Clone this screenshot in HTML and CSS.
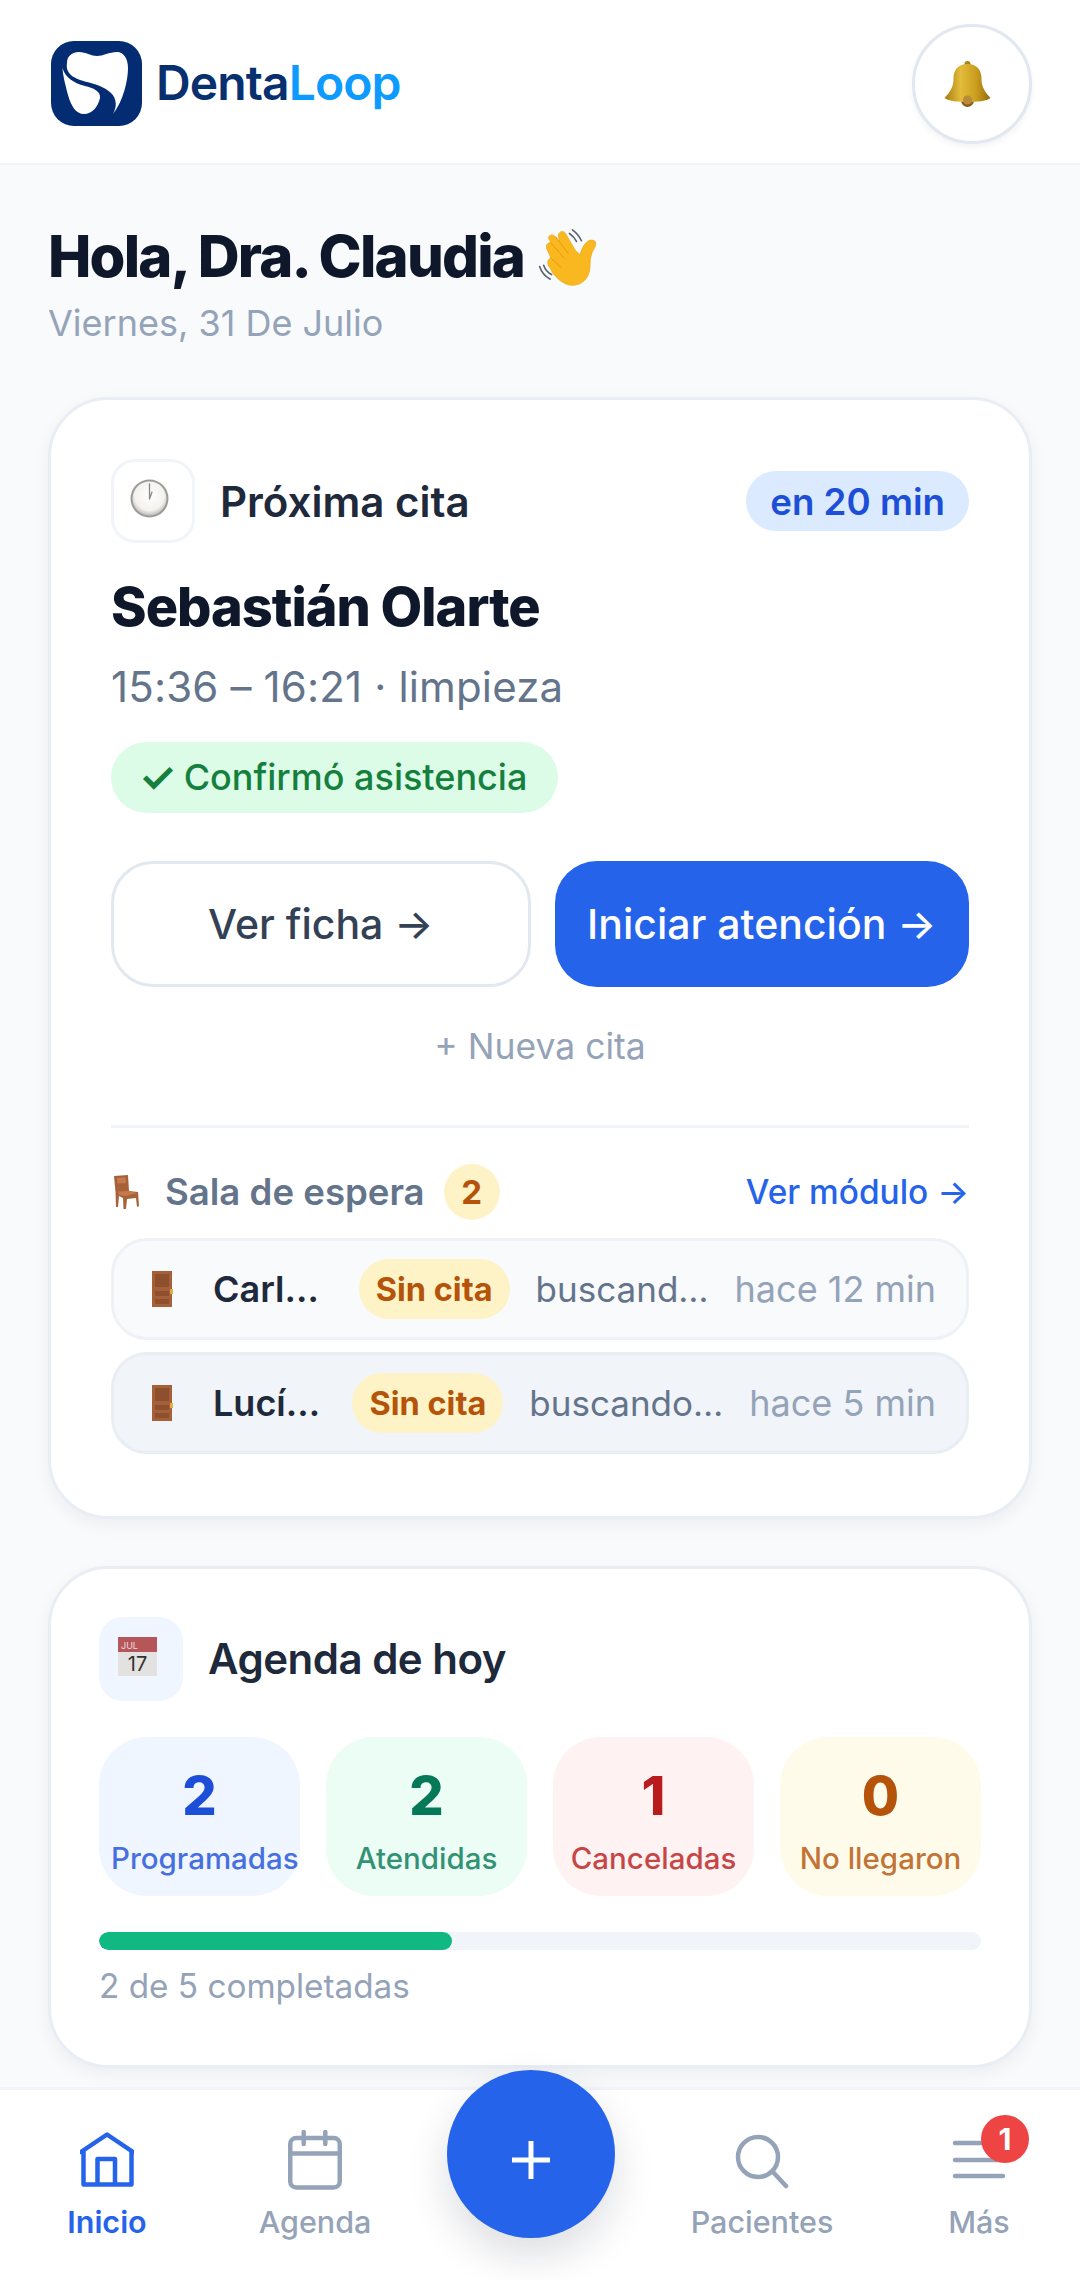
FILE: index.html
```html
<!DOCTYPE html>
<html lang="es">
<head>
    <meta charset="UTF-8">
    <meta name="viewport" content="width=device-width, initial-scale=1.0">
    <title>DentaLoop</title>
    <link rel="stylesheet" href="styles.css">
</head>
<body>
    <header class="topbar">
        <div class="brand">
            <svg class="brand-mark" viewBox="0 0 91 85">
                <rect width="91" height="85" rx="23" fill="#042c72"/>
                <path fill="#fff" d="M16 22C16 15 21 11 28 11C35 11 40 15 46 15C52 15 58 11 66 11C73 11 77 18 77 27C77 40 72 60 62 73C66 66 66 58 60 52C54 46 44 43 36 41C25 38 14 34 16 22Z"/>
                <path fill="#fff" d="M11.5 27C14 36 22 42 34 45C42 47 50 50 49 57C47 66 41 73 33 73C25 73 20 65 17 54C15 46 12 36 11.5 27Z"/>
            </svg>
            <div class="brand-name">Denta<span class="brand-loop">Loop</span></div>
        </div>
        <div class="bell-btn">
            <svg class="bell" viewBox="0 0 47 46">
                <defs>
                    <linearGradient id="bellGold" x1="0" x2="1" y1="0" y2="0">
                        <stop offset="0" stop-color="#a67c10"/>
                        <stop offset=".35" stop-color="#e3bc3c"/>
                        <stop offset=".7" stop-color="#c99c1e"/>
                        <stop offset="1" stop-color="#8f6a0c"/>
                    </linearGradient>
                </defs>
                <circle cx="23.500" cy="3" r="3" fill="#a8841a"/>
                <circle cx="23.500" cy="39.500" r="6.500" fill="#8a5f14"/>
                <path fill="url(#bellGold)" d="M23.500 3C13 3 9.500 10 9.500 18C9.500 26 6 31 .5 37C4 40 14 41 23.500 41C33 41 43 40 46.500 37C41 31 37.500 26 37.500 18C37.500 10 34 3 23.500 3Z"/>
                <circle cx="23.500" cy="39" r="4.500" fill="#b98a3a"/>
            </svg>
        </div>
    </header>

    <main class="content">
        <h1 class="greeting">Hola, Dra. Claudia
            <svg class="wave" viewBox="25 10 190 195">
                <g fill="none" stroke="#5c6470" stroke-width="5" stroke-linecap="round">
                    <path d="M135 27C147 36 156 46 162 60"/>
                    <path d="M126 38C135 44 142 52 147 62"/>
                    <path d="M36 138C41 154 52 168 68 176"/>
                    <path d="M48 134C52 146 60 156 72 162"/>
                </g>
                <path fill="#f9b81f" stroke="#eda211" stroke-width="2" d="M62 50C68 38 80 42 86 50L97 64L92 44C95 30 108 28 114 38L143 88L158 102C164 80 176 58 192 58C208 58 208 72 200 84C190 100 188 118 188 138C188 172 162 198 130 194C110 192 92 178 76 158L66 140C58 130 58 116 70 112L60 90C52 76 58 64 70 66Z"/>
                <g fill="none" stroke="#e8990c" stroke-width="3" stroke-linecap="round">
                    <path d="M86 50L122 98"/>
                    <path d="M70 66L110 112"/>
                    <path d="M70 112L100 140"/>
                </g>
            </svg>
        </h1>
        <p class="date">Viernes, 31 De Julio</p>

        <section class="card card-next">
            <div class="card-head">
                <div class="head-icon head-icon-line">
                    <svg class="emoji-clock" viewBox="0 0 39 39">
                        <defs>
                            <radialGradient id="clockFace" cx=".5" cy=".42" r=".6">
                                <stop offset="0" stop-color="#fff"/>
                                <stop offset=".72" stop-color="#f4f2ee"/>
                                <stop offset="1" stop-color="#b8b6b2"/>
                            </radialGradient>
                        </defs>
                        <circle cx="19.500" cy="19.500" r="19" fill="#9b9b9b"/>
                        <circle cx="19.500" cy="19.500" r="17" fill="url(#clockFace)"/>
                        <path d="M19.500 20V5M19.500 20L22 13" stroke="#888" stroke-width="1.300" stroke-linecap="round"/>
                    </svg>
                </div>
                <h2 class="card-title">Próxima cita</h2>
                <span class="time-pill">en 20 min</span>
            </div>
            <div class="patient">Sebastián Olarte</div>
            <div class="slot">15:36 – 16:21 · limpieza</div>
            <div class="confirm-pill"><span class="confirm-check">✓</span>Confirmó asistencia</div>
            <div class="actions">
                <button class="btn btn-line">Ver ficha →</button>
                <button class="btn btn-main">Iniciar atención →</button>
            </div>
            <div class="new-link">+ Nueva cita</div>
            <div class="divider"></div>
            <div class="wait-head">
                <svg class="emoji-chair" viewBox="0 0 25 34">
                    <path fill="#a8623a" d="M0 1L14 0L15 16L24 17L25 31L23 32L22 23L13 24L12 34L9.500 34L9 23L5 21L4 32L2 32L1.500 17Z"/>
                    <path fill="#c47a4c" d="M3 3L11.500 2.500L12 8L3.500 8.500ZM4 16.500L15 16L23 18L12 21L5 20Z"/>
                </svg>
                <span class="wait-title">Sala de espera</span>
                <span class="wait-count">2</span>
                <span class="wait-link">Ver módulo →</span>
            </div>
            <div class="wait-row">
                <svg class="emoji-door" viewBox="0 0 21 36">
                    <rect width="20" height="36" fill="#a5603a"/>
                    <rect x="3" y="3" width="14" height="13" fill="#8d4f2e"/>
                    <rect x="3" y="20" width="14" height="5" fill="#8d4f2e"/>
                    <rect x="3" y="28" width="14" height="5" fill="#8d4f2e"/>
                    <rect x="18" y="18" width="3" height="5" fill="#e0b040"/>
                </svg>
                <span class="wait-name">Carl…</span>
                <span class="tag">Sin cita</span>
                <span class="wait-reason">buscand…</span>
                <span class="wait-time">hace 12 min</span>
            </div>
            <div class="wait-row wait-row-active">
                <svg class="emoji-door" viewBox="0 0 21 36">
                    <rect width="20" height="36" fill="#a5603a"/>
                    <rect x="3" y="3" width="14" height="13" fill="#8d4f2e"/>
                    <rect x="3" y="20" width="14" height="5" fill="#8d4f2e"/>
                    <rect x="3" y="28" width="14" height="5" fill="#8d4f2e"/>
                    <rect x="18" y="18" width="3" height="5" fill="#e0b040"/>
                </svg>
                <span class="wait-name">Lucí…</span>
                <span class="tag">Sin cita</span>
                <span class="wait-reason">buscando…</span>
                <span class="wait-time">hace 5 min</span>
            </div>
        </section>

        <section class="card card-today">
            <div class="card-head">
                <div class="head-icon head-icon-blue">
                    <svg class="emoji-cal" viewBox="0 0 39 39">
                        <rect width="39" height="39" fill="#e3e2e0"/>
                        <rect width="39" height="15" fill="#b5565a"/>
                        <text class="cal-month" x="3" y="12">JUL</text>
                        <text class="cal-day" x="19.500" y="34">17</text>
                    </svg>
                </div>
                <h2 class="card-title">Agenda de hoy</h2>
            </div>
            <div class="stats">
                <div class="stat stat-blue"><div class="stat-num">2</div><div class="stat-label">Programadas</div></div>
                <div class="stat stat-green"><div class="stat-num">2</div><div class="stat-label">Atendidas</div></div>
                <div class="stat stat-red"><div class="stat-num">1</div><div class="stat-label">Canceladas</div></div>
                <div class="stat stat-amber"><div class="stat-num">0</div><div class="stat-label">No llegaron</div></div>
            </div>
            <div class="progress"><div class="progress-fill" style="width: 40%"></div></div>
            <div class="progress-text">2 de 5 completadas</div>
        </section>
    </main>

    <nav class="tabbar">
        <div class="tab tab-on">
            <svg class="tab-icon" viewBox="0 0 54 60">
                <path d="M1 22L27 4.500L53 22M3.500 21V54.500H51.500V21M17.500 54.500V29H35V54.500"/>
            </svg>
            <span>Inicio</span>
        </div>
        <div class="tab">
            <svg class="tab-icon" viewBox="0 0 54 60">
                <rect x="2.250" y="8" width="49.500" height="49.500" rx="6"/>
                <path d="M2.250 23.500H51.750M15.700 2V14M37.300 2V14"/>
            </svg>
            <span>Agenda</span>
        </div>
        <div class="tab-gap"></div>
        <div class="tab">
            <svg class="tab-icon" viewBox="0 0 54 60">
                <circle cx="23" cy="27" r="20"/>
                <path d="M38 42L51 56"/>
            </svg>
            <span>Pacientes</span>
        </div>
        <div class="tab">
            <div class="menu-wrap">
                <svg class="tab-icon" viewBox="0 0 54 60">
                    <path d="M3 13H51M3 30H51M3 46H51"/>
                </svg>
                <span class="menu-badge">1</span>
            </div>
            <span>Más</span>
        </div>
        <div class="fab">
            <svg class="fab-plus" viewBox="0 0 38 38"><path d="M19 0V38M0 19H38"/></svg>
        </div>
    </nav>
</body>
</html>
```

FILE: styles.css
```css
* {
    box-sizing: border-box;
}
body {
    margin: 0;
    width: 1080px;
    height: 2280px;
    overflow: hidden;
    display: flex;
    flex-direction: column;
    background-color: #f8fafc;
    font-family: Inter, "Noto Sans", sans-serif;
    color: #0f172a;
}

/* top bar */
.topbar {
    height: 165px;
    flex: none;
    display: flex;
    align-items: center;
    justify-content: space-between;
    padding: 4px 48px 0 51px;
    background-color: #fff;
    border-bottom: 2px solid #f1f5f9;
}
.brand {
    display: flex;
    align-items: center;
    gap: 14px;
}
.brand-mark {
    width: 91px;
    height: 85px;
    display: block;
}
.brand-name {
    font-size: 48px;
    font-weight: 600;
    letter-spacing: -0.9px;
    color: #08306f;
    margin-top: -3px;
}
.brand-loop {
    color: #0d9bff;
}
.bell-btn {
    width: 120px;
    height: 120px;
    border-radius: 50%;
    border: 3px solid #e2e8f0;
    background-color: #fff;
    box-shadow: 0 3px 6px rgba(15, 23, 42, 0.05);
    display: flex;
    align-items: center;
    justify-content: center;
}
.bell {
    width: 47px;
    height: 46px;
    margin-right: 10px;
}

/* greeting */
.content {
    flex: 1;
    min-height: 0;
    overflow: hidden;
    padding: 60px 48px 0;
}
.greeting {
    margin: 0;
    height: 63px;
    display: flex;
    align-items: center;
    gap: 12px;
    font-size: 58px;
    line-height: 63px;
    font-weight: 800;
    letter-spacing: -1.8px;
    color: #0f172a;
}
.wave {
    width: 63px;
    height: 65px;
    flex: none;
}
.date {
    margin: 13px 0 52px;
    font-size: 36px;
    line-height: 44px;
    color: #94a3b8;
}

/* cards */
.card {
    background-color: #fff;
    border: 3px solid #e9eef4;
    border-radius: 60px;
    box-shadow: 0 6px 18px rgba(15, 23, 42, 0.05);
}
.card-next {
    padding: 59px 60px 58px;
    height: 1122px;
}
.card-today {
    margin-top: 47px;
    padding: 48px 48px 0;
    height: 502px;
}
.card-head {
    height: 84px;
    display: flex;
    align-items: center;
}
.head-icon {
    width: 84px;
    height: 84px;
    flex: none;
    border-radius: 24px;
    display: flex;
    align-items: center;
    justify-content: center;
}
.head-icon-line {
    border: 3px solid #f1f5f9;
}
.head-icon-blue {
    background-color: #eff6ff;
}
.emoji-clock,
.emoji-cal {
    width: 39px;
    height: 39px;
    margin: -6px 8px 0 0;
}
.cal-month {
    font-size: 9px;
    fill: #f3dcdc;
}
.cal-day {
    font-size: 20px;
    fill: #333;
    text-anchor: middle;
}
.card-title {
    margin: 0 0 0 25px;
    font-size: 42px;
    font-weight: 600;
    color: #1e293b;
}
.card-today .card-title {
    letter-spacing: -0.5px;
    padding-bottom: 2px;
}
.time-pill {
    margin-left: auto;
    height: 60px;
    padding: 0 24px;
    display: flex;
    align-items: center;
    border-radius: 30px;
    background-color: #dbeafe;
    color: #1d4ed8;
    font-size: 36.7px;
    font-weight: 600;
}
.patient {
    margin-top: 31px;
    font-size: 54px;
    line-height: 66px;
    font-weight: 800;
    letter-spacing: -1px;
    color: #0f172a;
}
.slot {
    margin-top: 21px;
    font-size: 42px;
    line-height: 52px;
    letter-spacing: 0.15px;
    color: #64748b;
}
.confirm-pill {
    margin-top: 29px;
    height: 71px;
    width: 447px;
    display: flex;
    align-items: center;
    justify-content: center;
    gap: 8px;
    padding: 0 3px 2px 0;
    border-radius: 36px;
    background-color: #dcfce7;
    color: #15803d;
    font-size: 36px;
    font-weight: 500;
}
.confirm-check {
    font-size: 42px;
    font-weight: 600;
}
.actions {
    margin-top: 48px;
    display: grid;
    grid-template-columns: 419fr 414fr;
    gap: 24px;
}
.btn {
    height: 126px;
    border-radius: 42px;
    font-family: inherit;
    font-size: 41px;
    font-weight: 500;
    padding: 0;
}
.btn-line {
    background-color: #fff;
    border: 3px solid #e2e8f0;
    color: #334155;
}
.btn-main {
    background-color: #2563eb;
    border: none;
    color: #fff;
}
.new-link {
    margin-top: 37px;
    text-align: center;
    font-size: 35.5px;
    line-height: 46px;
    color: #94a3b8;
}
.divider {
    margin-top: 55px;
    height: 3px;
    background-color: #f1f5f9;
}

/* waiting room */
.wait-head {
    margin-top: 36px;
    height: 56px;
    display: flex;
    align-items: center;
    padding-left: 3px;
}
.emoji-chair {
    width: 25px;
    height: 34px;
    flex: none;
}
.wait-title {
    margin-left: 26px;
    font-size: 36.6px;
    font-weight: 600;
    color: #64748b;
}
.wait-count {
    margin-left: 19px;
    width: 56px;
    height: 56px;
    border-radius: 50%;
    display: flex;
    align-items: center;
    justify-content: center;
    background-color: #fef3c7;
    color: #b45309;
    font-size: 33px;
    font-weight: 700;
}
.wait-link {
    margin-left: auto;
    font-size: 33.4px;
    font-weight: 500;
    color: #2563eb;
}
.wait-row {
    margin-top: 18px;
    height: 102px;
    display: flex;
    align-items: center;
    gap: 26px;
    padding: 0 30px 0 38px;
    border: 3px solid #eef2f6;
    border-radius: 36px;
    background-color: #f8fafc;
}
.wait-row-active {
    margin-top: 12px;
    background-color: #f1f5f9;
    border-color: #e9eef4;
}
.emoji-door {
    width: 21px;
    height: 36px;
    flex: none;
    margin-right: 14px;
}
.wait-name {
    flex: 1;
    font-size: 36px;
    font-weight: 600;
    color: #1e293b;
}
.tag {
    height: 60px;
    padding: 0 17px;
    display: flex;
    align-items: center;
    border-radius: 30px;
    background-color: #fef3c7;
    color: #b45309;
    font-size: 32.5px;
    font-weight: 700;
}
.wait-reason {
    font-size: 35px;
    color: #64748b;
}
.wait-time {
    font-size: 36px;
    color: #94a3b8;
}

/* agenda */
.stats {
    margin-top: 36px;
    display: grid;
    grid-template-columns: repeat(4, minmax(0, 1fr));
    gap: 26px;
}
.stat {
    height: 159px;
    border-radius: 48px;
    text-align: center;
    padding: 29px 12px 0;
}
.stat-num {
    font-size: 54px;
    line-height: 60px;
    font-weight: 800;
}
.stat-label {
    margin-top: 12px;
    font-size: 29.5px;
    line-height: 40px;
    font-weight: 500;
    opacity: 0.8;
    white-space: nowrap;
}
.stat-blue { background-color: #eff6ff; color: #1d4ed8; }
.stat-green { background-color: #ecfdf5; color: #047857; }
.stat-red { background-color: #fef2f2; color: #b91c1c; }
.stat-amber { background-color: #fffbeb; color: #b45309; }
.progress {
    margin-top: 36px;
    height: 18px;
    border-radius: 9px;
    background-color: #f1f5f9;
    overflow: hidden;
}
.progress-fill {
    height: 100%;
    border-radius: 9px;
    background-color: #10b981;
}
.progress-text {
    margin-top: 14px;
    font-size: 33.3px;
    line-height: 44px;
    color: #94a3b8;
}

/* bottom nav */
.tabbar {
    position: relative;
    height: 193px;
    flex: none;
    display: grid;
    grid-template-columns: 214px 202px 230px 232px 202px;
    background-color: #fff;
    border-top: 3px solid #f1f5f9;
    padding-top: 40px;
}
.tab {
    display: flex;
    flex-direction: column;
    align-items: center;
    gap: 12px;
    font-size: 30.5px;
    line-height: 40px;
    font-weight: 500;
    color: #94a3b8;
}
.tab-on {
    color: #2563eb;
    font-weight: 600;
}
.tab-icon {
    width: 54px;
    height: 60px;
    display: block;
    fill: none;
    stroke: currentColor;
    stroke-width: 4.5;
    stroke-linecap: round;
    stroke-linejoin: round;
}
.menu-wrap {
    position: relative;
}
.menu-badge {
    position: absolute;
    top: -15px;
    right: -23px;
    width: 48px;
    height: 48px;
    border-radius: 50%;
    background-color: #ef4444;
    color: #fff;
    font-size: 30px;
    font-weight: 700;
    display: flex;
    align-items: center;
    justify-content: center;
}
.fab {
    position: absolute;
    top: -20px;
    left: 447px;
    width: 168px;
    height: 168px;
    border-radius: 50%;
    background-color: #2563eb;
    box-shadow: 0 18px 42px rgba(15, 23, 42, 0.14);
    display: flex;
    align-items: center;
    justify-content: center;
}
.fab-plus {
    width: 38px;
    height: 38px;
    margin-top: 12px;
    fill: none;
    stroke: #fff;
    stroke-width: 5;
}
```
